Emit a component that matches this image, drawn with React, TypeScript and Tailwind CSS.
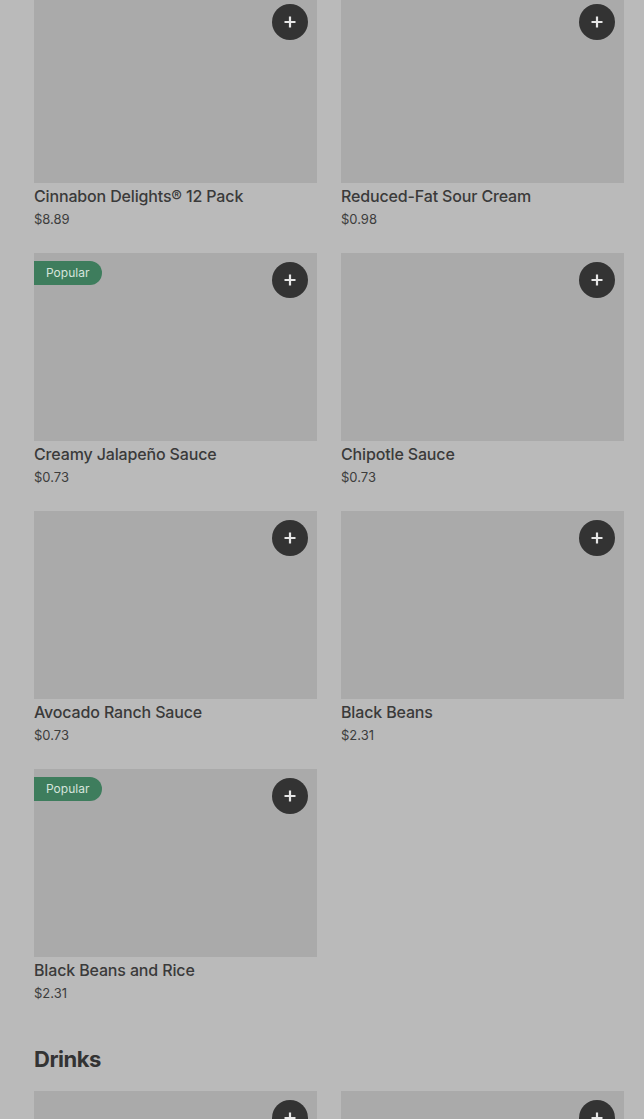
import React from "react";

type Item = { name?: string; price?: string; popular?: boolean };

const Items: Item[] = [
	{ name: "Cinnabon Delights® 12 Pack", price: "$8.89" },
	{ name: "Reduced-Fat Sour Cream", price: "$0.98" },
	{ name: "Creamy Jalapeño Sauce", price: "$0.73", popular: true },
	{ name: "Chipotle Sauce", price: "$0.73" },
	{ name: "Avocado Ranch Sauce", price: "$0.73" },
	{ name: "Black Beans", price: "$2.31" },
	{ name: "Black Beans and Rice", price: "$2.31", popular: true },
];

// drinks cards are cut off by the fold, only their images show
const Drinks: Item[] = [{}, {}];

const PlusIcon = () => (
	<svg width="14" height="14" viewBox="0 0 14 14" fill="none">
		<path d="M7 1.5v11M1.5 7h11" stroke="#e6e6e6" strokeWidth="2.2" />
	</svg>
);

const Card = ({ item }: { item: Item }) => (
	<div className="flex flex-col">
		<div className="relative h-[188px] bg-[#aaaaaa]">
			{item.popular && (
				<span className="absolute left-0 top-2 flex h-6 w-[68px] items-center rounded-r-full bg-[#3e7d5d] pl-3 text-[12px] text-[#d6e4dc]">
					Popular
				</span>
			)}
			<button className="absolute right-[9px] top-[9px] flex h-9 w-9 items-center justify-center rounded-full bg-[#333333]">
				<PlusIcon />
			</button>
		</div>
		{item.name && (
			<>
				<div className="mt-[3px] text-[16px] leading-5 font-medium tracking-[-0.15px] text-[#3a3a3a]">
					{item.name}
				</div>
				<div className="mt-[4px] text-[13px] leading-[18px] text-[#3d3d3d]">
					{item.price}
				</div>
			</>
		)}
	</div>
);

export default function App() {
	return (
		<div
			className="h-[1119px] overflow-hidden bg-[#bababa] pl-[34px] pr-[20px]"
			style={{ fontFamily: "Inter, 'Noto Sans', sans-serif" }}
		>
			<div className="-mt-[5px] grid grid-cols-2 gap-x-6 gap-y-[25px]">
				{Items.map((item, i) => (
					<Card key={i} item={item} />
				))}
			</div>
			<h2 className="mt-[43px] text-[22px] leading-7 font-bold tracking-[-0.5px] text-[#333333]">
				Drinks
			</h2>
			<div className="mt-[18px] grid grid-cols-2 gap-x-6 gap-y-6">
				{Drinks.map((item, i) => (
					<Card key={i} item={item} />
				))}
			</div>
		</div>
	);
}
